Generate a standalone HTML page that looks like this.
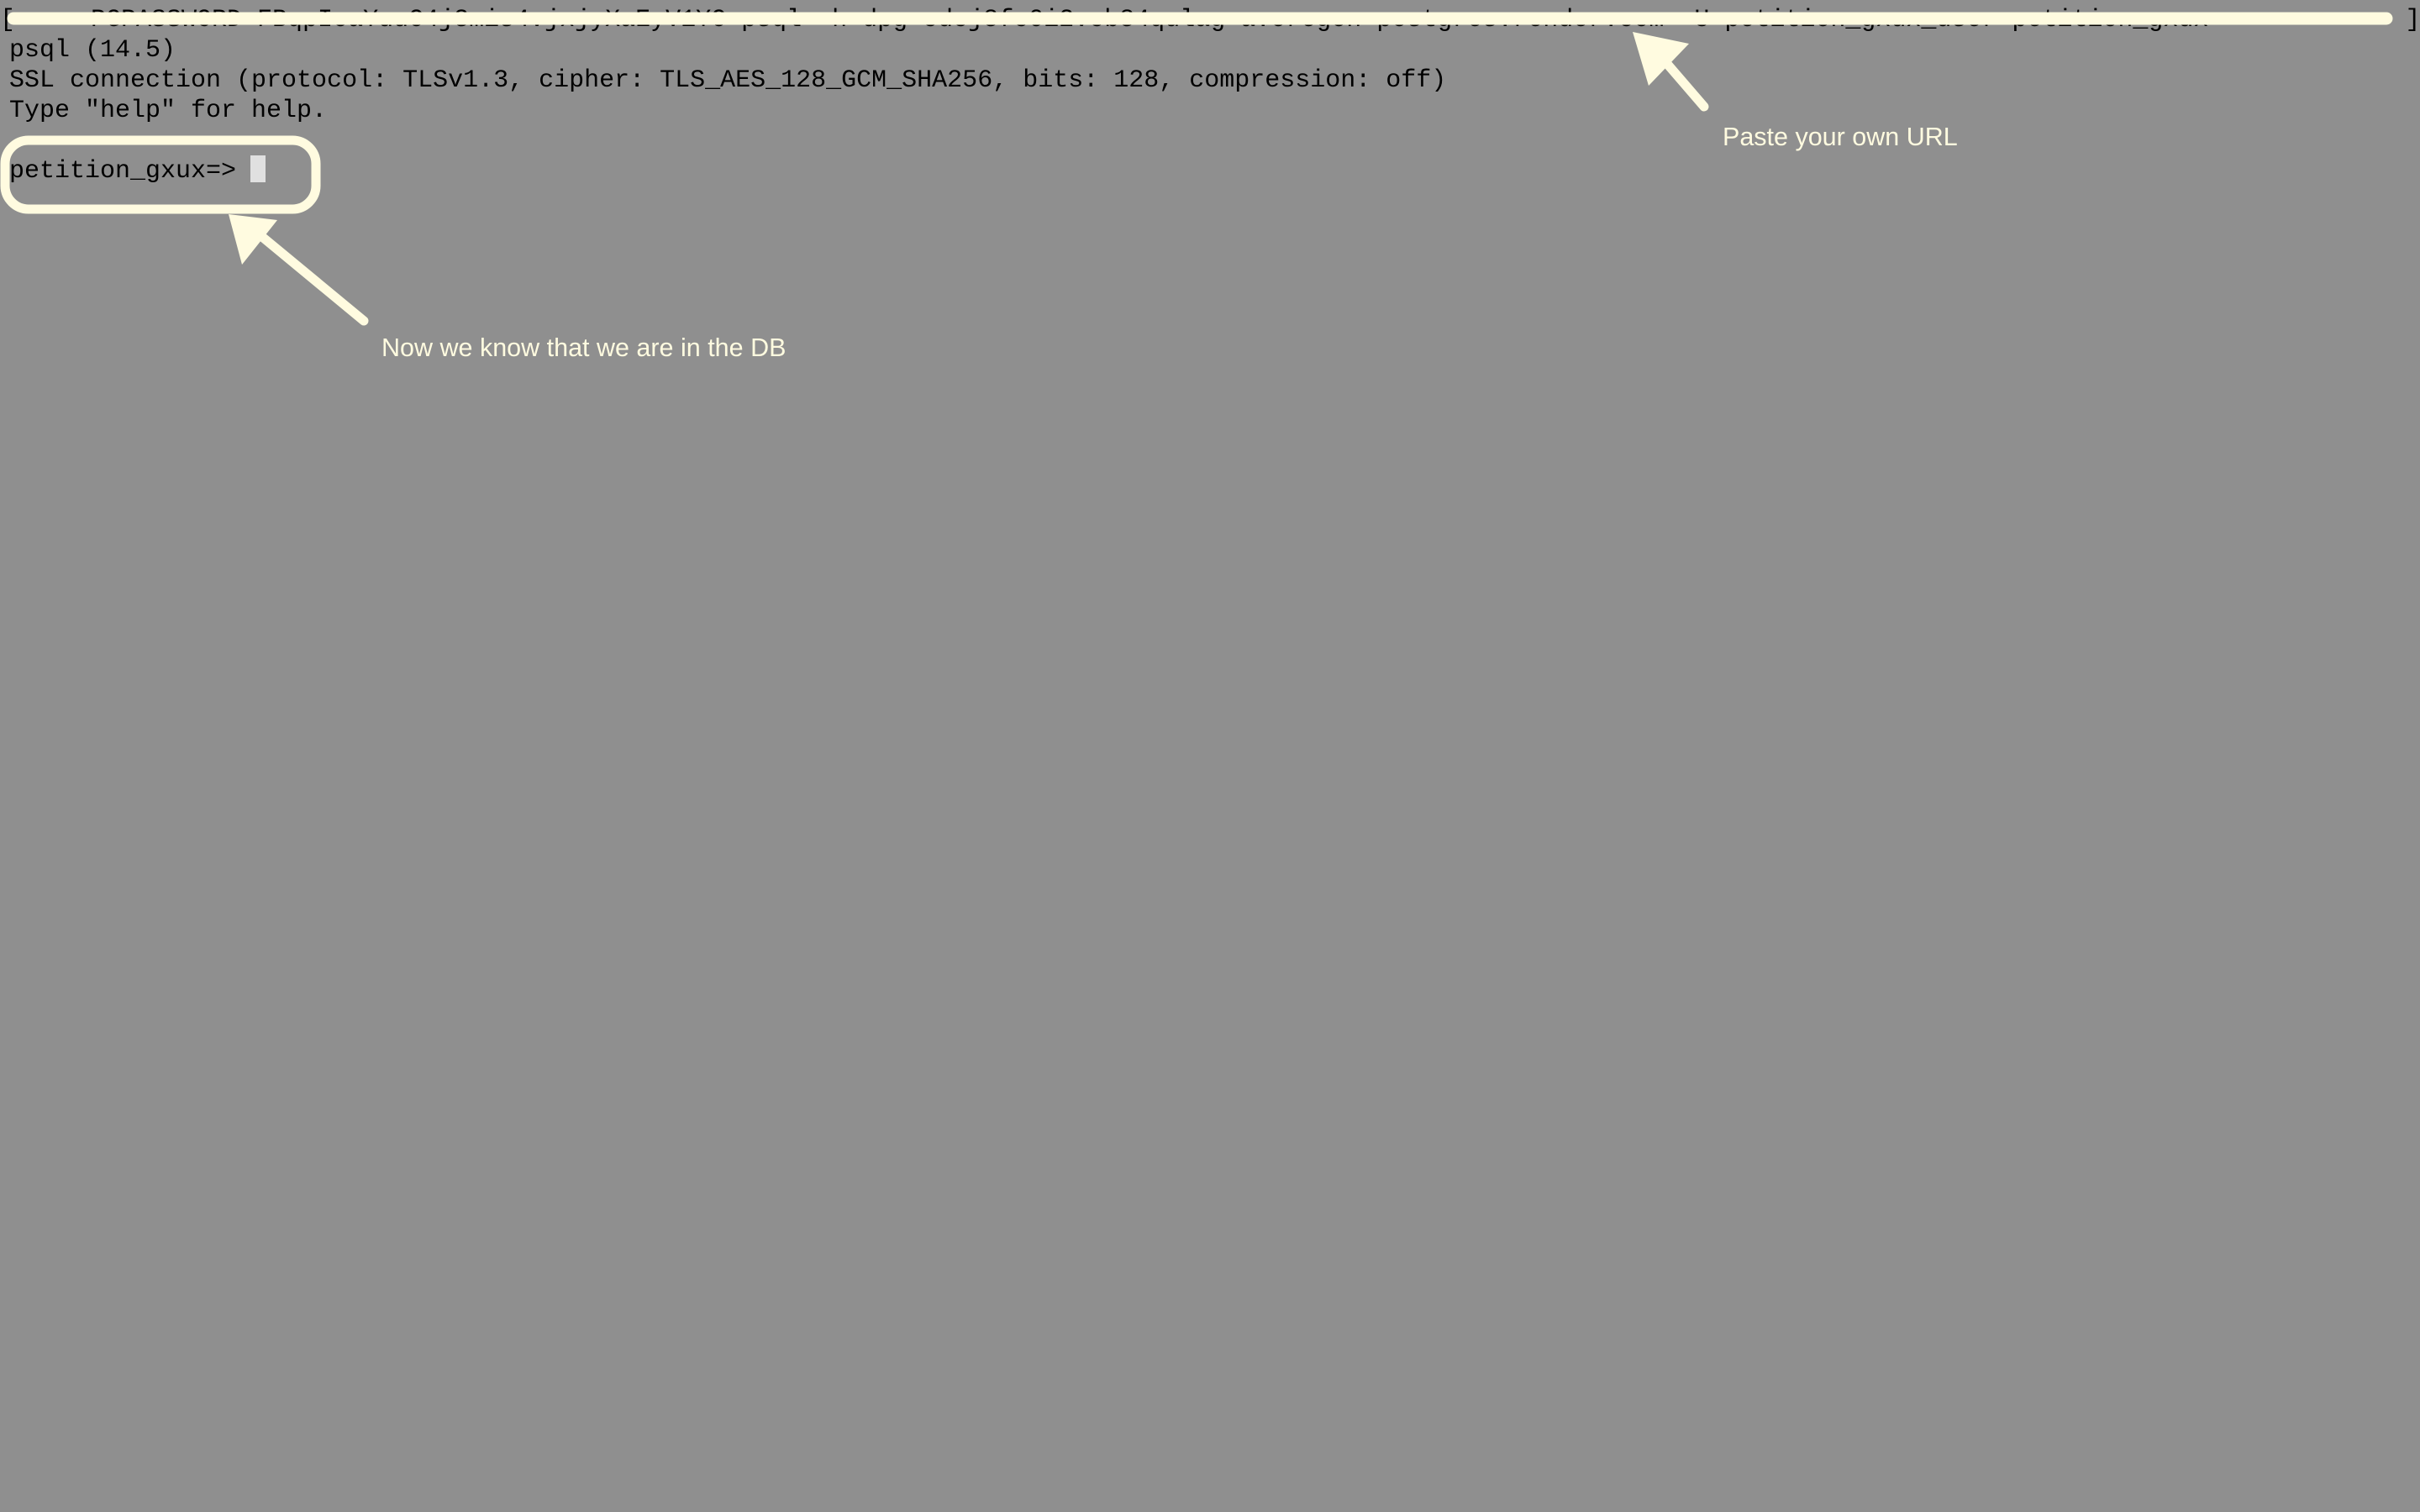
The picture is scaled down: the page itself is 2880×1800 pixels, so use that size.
<!DOCTYPE html>
<html><head><meta charset="utf-8">
<style>
html,body{margin:0;padding:0;}
body{width:2880px;height:1800px;background:#8f8f8f;position:relative;overflow:hidden;}
.t{position:absolute;left:11px;font-family:"Liberation Mono",monospace;font-size:30px;color:#000;white-space:pre;line-height:36px;}
.a{position:absolute;font-family:"Liberation Sans",sans-serif;font-size:30.5px;color:#fffbe0;white-space:pre;}
</style></head><body>
<div class="t" style="top:6px;left:0">[     PGPASSWORD=FBqpIoaYuuC4j3mis4vjxjyXaEyV1YC psql -h dpg-cdcj8fc0i2vcb84qulag-a.oregon-postgres.render.com -U petition_gxux_user petition_gxux             ]</div>
<div class="t" style="top:42px">psql (14.5)</div>
<div class="t" style="top:78px">SSL connection (protocol: TLSv1.3, cipher: TLS_AES_128_GCM_SHA256, bits: 128, compression: off)</div>
<div class="t" style="top:114px">Type "help" for help.</div>
<div class="t" style="top:186px">petition_gxux=&gt; </div>
<div style="position:absolute;left:298px;top:185px;width:18px;height:32px;background:#e0e0e0"></div>
<svg width="2880" height="1800" style="position:absolute;left:0;top:0" xmlns="http://www.w3.org/2000/svg">
<g stroke="#fffbe0" fill="none" stroke-linecap="round" stroke-linejoin="round">
<line x1="16" y1="22" x2="2840" y2="22" stroke-width="15"/>
<rect x="6" y="167" width="370" height="82" rx="28" stroke-width="11"/>
<line x1="300" y1="272" x2="433" y2="382" stroke-width="11"/>
<line x1="1960" y1="48" x2="2028" y2="127" stroke-width="11"/>
</g>
<g fill="#fffbe0">
<polygon points="272,255 330,262 288,315"/>
<polygon points="1943,38 2010,52 1962,102"/>
</g>
</svg>
<div class="a" style="left:454px;top:397px">Now we know that we are in the DB</div>
<div class="a" style="left:2050px;top:146px">Paste your own URL</div>
</body></html>
